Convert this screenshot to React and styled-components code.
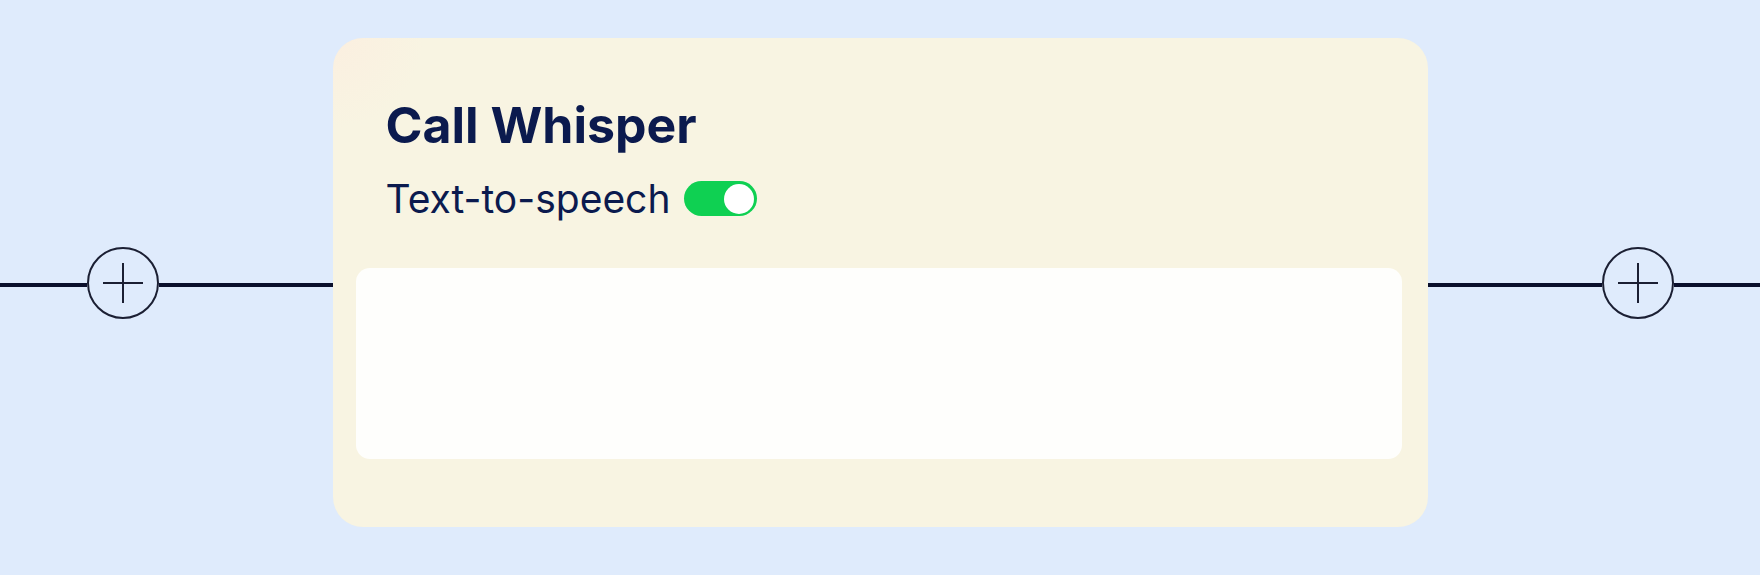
import React from "react";
import styled, { createGlobalStyle } from "styled-components";

const Global = createGlobalStyle`
  html, body { margin: 0; padding: 0; }
  body {
    background: #dfebfc;
    font-family: Inter, "Noto Sans", sans-serif;
  }
`;

const Page = styled.div`
  width: 1760px;
  height: 575px;
  background: #dfebfc;
  display: flex;
  align-items: flex-start;
  overflow: hidden;
`;

const Connector = styled.div`
  flex: 1;
  height: 489px;
  margin-top: 38px;
  display: flex;
  align-items: center;
  flex-direction: ${(p) => (p.$reverse ? "row-reverse" : "row")};
`;

const Line = styled.div`
  flex: ${(p) => p.$grow};
  height: 4px;
  background: #0a0f2c;
  margin-top: 5px;
`;

const PlusButton = styled.button`
  flex: none;
  width: 72px;
  height: 72px;
  box-sizing: border-box;
  border-radius: 50%;
  border: 2px solid #1b1f33;
  background: transparent;
  padding: 0;
  margin-top: 1px;
  display: flex;
  align-items: center;
  justify-content: center;
  cursor: pointer;
`;

const Card = styled.section`
  flex: none;
  width: 1095px;
  height: 489px;
  margin-top: 38px;
  box-sizing: border-box;
  border-radius: 30px;
  background: radial-gradient(circle at 0% 0%, #fbefe0 0%, #f8f4e2 90px), #f8f4e2;
  padding: 57px 26px 68px 23px;
  display: flex;
  flex-direction: column;
`;

const Header = styled.div`
  padding-left: 30px;
  display: flex;
  flex-direction: column;
  gap: 20px;
`;

const Title = styled.h1`
  margin: 0;
  font-family: Inter, sans-serif;
  font-weight: 700;
  font-size: 50px;
  line-height: 60px;
  color: #0b1a4e;
`;

const SettingRow = styled.div`
  display: flex;
  align-items: center;
  gap: 14px;
`;

const SettingLabel = styled.span`
  font-family: Inter, sans-serif;
  font-weight: 400;
  font-size: 39px;
  line-height: 47px;
  color: #0b1a4e;
`;

const Toggle = styled.div`
  width: 73px;
  height: 35px;
  border-radius: 18px;
  background: ${(p) => (p.$on ? "#0fd052" : "#c9ccd6")};
  display: flex;
  align-items: center;
  justify-content: ${(p) => (p.$on ? "flex-end" : "flex-start")};
  padding: 0 3px;
  box-sizing: border-box;
  margin-top: 0px;
`;

const Knob = styled.div`
  width: 30px;
  height: 30px;
  border-radius: 50%;
  background: #ffffff;
`;

const MessageBox = styled.div`
  margin-top: 46px;
  height: 191px;
  border-radius: 14px;
  background: #fefefc;
`;

function Plus() {
  return (
    <svg width="40" height="40" viewBox="0 0 40 40" aria-hidden="true">
      <path d="M0 20 H40 M20 0 V40" stroke="#1b1f33" strokeWidth="2" fill="none" />
    </svg>
  );
}

export default function App() {
  return (
    <>
      <Global />
      <Page>
        <Connector>
          <Line $grow={87} />
          <PlusButton aria-label="Add step before">
            <Plus />
          </PlusButton>
          <Line $grow={175} />
        </Connector>
        <Card>
          <Header>
            <Title>Call Whisper</Title>
            <SettingRow>
              <SettingLabel>Text-to-speech</SettingLabel>
              <Toggle $on>
                <Knob />
              </Toggle>
            </SettingRow>
          </Header>
          <MessageBox />
        </Card>
        <Connector $reverse>
          <Line $grow={86} />
          <PlusButton aria-label="Add step after">
            <Plus />
          </PlusButton>
          <Line $grow={173} />
        </Connector>
      </Page>
    </>
  );
}
